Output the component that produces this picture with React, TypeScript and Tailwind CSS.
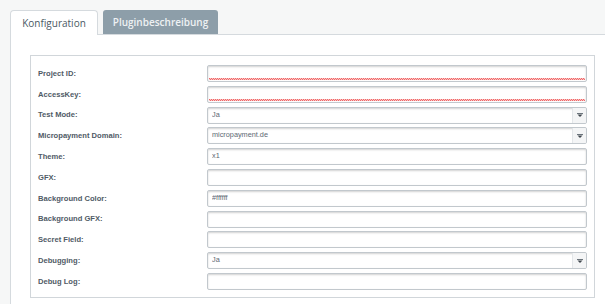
import React from 'react';

type Field = {
  label: string;
  value?: string;
  select?: boolean;
  invalid?: boolean;
};

const fields: Field[] = [
  { label: 'Project ID:', invalid: true },
  { label: 'AccessKey:', invalid: true },
  { label: 'Test Mode:', value: 'Ja', select: true },
  { label: 'Micropayment Domain:', value: 'micropayment.de', select: true },
  { label: 'Theme:', value: 'x1' },
  { label: 'GFX:' },
  { label: 'Background Color:', value: '#ffffff' },
  { label: 'Background GFX:' },
  { label: 'Secret Field:' },
  { label: 'Debugging:', value: 'Ja', select: true },
  { label: 'Debug Log:' },
];

function FieldInput({ field }: { field: Field }) {
  return (
    <div className="relative flex h-[17px] items-center overflow-hidden rounded-[2px] border border-[#c2c8cd] bg-white pl-[4px] text-[7.3px] text-[#5d6873] shadow-[inset_0_1px_2px_rgba(0,0,0,0.18)]">
      <span className="flex-1 truncate">{field.value}</span>
      {field.select && (
        <span className="flex h-full w-[14px] items-center justify-center border-l border-[#e3e6e9] bg-[#f4f5f6]">
          <svg width="6" height="4" viewBox="0 0 6 4">
            <rect x="0" y="0" width="6" height="1" fill="#6b747c" />
            <path d="M0.5 1.5 L5.5 1.5 L3 4 Z" fill="#3f464d" />
          </svg>
        </span>
      )}
      {field.invalid && (
        // red spellcheck-like squiggle on empty required fields
        <span className="absolute bottom-[1px] left-[1px] right-[1px] flex h-[2px] flex-col">
          <span className="h-px bg-[repeating-linear-gradient(90deg,#f06868_0_1px,#f9c4c4_1px_2px)]" />
          <span className="h-px bg-[repeating-linear-gradient(90deg,#f9c4c4_0_1px,#f06868_1px_2px)]" />
        </span>
      )}
    </div>
  );
}

export default function App() {
  return (
    <div
      className="h-[304px] w-[605px] overflow-hidden bg-[#f6f7f7] pl-[10px] pt-[10px]"
      style={{ fontFamily: '"Liberation Sans", Arial, sans-serif' }}
    >
      <div className="flex gap-[5px] text-[10px]" style={{ fontFamily: '"Open Sans", sans-serif' }}>
        <div className="relative z-10 -mb-px flex h-[25px] w-[88px] items-center justify-center rounded-t-[4px] border border-b-0 border-[#d5dade] bg-white text-[#4b5964]">
          Konfiguration
        </div>
        <div className="flex h-[24px] w-[115px] items-center justify-center rounded-t-[3px] bg-[#8d9ea9] font-semibold text-[#eef1f3]">
          Pluginbeschreibung
        </div>
      </div>
      <div className="h-[300px] border-l border-t border-[#d5dade] bg-white pl-[19px] pr-[10px] pt-[20px]">
        <div className="grid grid-cols-[169px_1fr] items-center gap-y-[3.8px] border border-[#d1d6da] pb-[7px] pl-[7px] pr-[7px] pt-[9px]">
          {fields.map((f) => (
            <React.Fragment key={f.label}>
              <div className="text-[7.6px] font-bold text-[#505b66]">{f.label}</div>
              <FieldInput field={f} />
            </React.Fragment>
          ))}
        </div>
      </div>
    </div>
  );
}
